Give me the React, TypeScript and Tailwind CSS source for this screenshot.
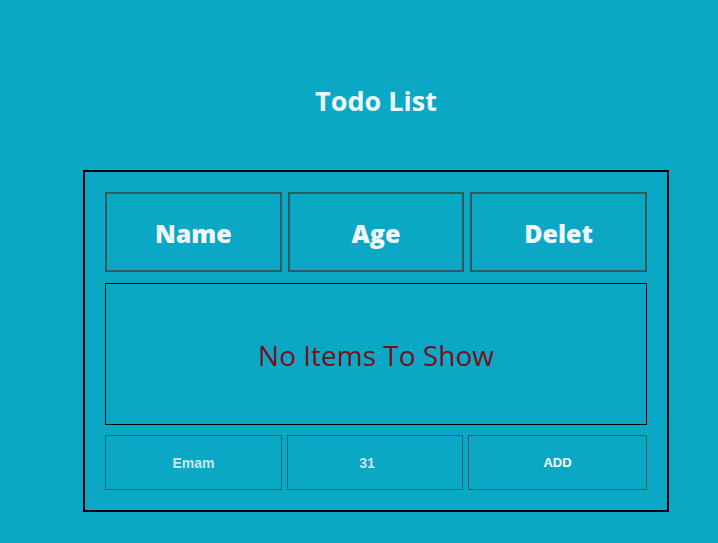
import { useState } from 'react'

interface Item {
  name: string
  age: string
}

export default function App() {
  const [items, setItems] = useState<Item[]>([])
  const [name, setName] = useState('')
  const [age, setAge] = useState('')

  const addItem = () => {
    if (!name || !age) return
    setItems([...items, { name, age }])
    setName('')
    setAge('')
  }

  return (
    <div className="min-h-[543px] bg-[#0ba8c6] pt-[80px] pb-[31px]" style={{ fontFamily: '"Open Sans", "Noto Sans", sans-serif' }}>
      <h1 className="ml-[83px] w-[586px] text-center text-[27px] font-bold leading-[42px] text-[#f0f8ff]">Todo List</h1>

      <div className="ml-[83px] mt-[48px] w-[586px] border-2 border-black p-[20px]">
        <div className="grid grid-cols-3 gap-[6px]">
          {['Name', 'Age', 'Delet'].map((h) => (
            <div key={h} className="flex h-[80px] items-center justify-center border-2 border-[#2f5a5e] pt-[3px] text-[25px] font-extrabold text-[#f0f8ff]">
              {h}
            </div>
          ))}
        </div>

        <div className="mt-[11px] flex h-[142px] flex-col items-center justify-center border border-black">
          {items.length ? (
            items.map((item, i) => (
              <div key={i} className="grid w-full grid-cols-3 text-center text-white">
                <span>{item.name}</span>
                <span>{item.age}</span>
                <span className="cursor-pointer" onClick={() => setItems(items.filter((_, j) => j !== i))}>x</span>
              </div>
            ))
          ) : (
            <p className="pt-[2px] text-[28px] text-[#7a0f1a]">No Items To Show</p>
          )}
        </div>

        <div className="mt-[10px] grid grid-cols-[177px_176px_179px] gap-[5px]" style={{ fontFamily: '"Liberation Sans", Arial, sans-serif' }}>
          <input
            value={name}
            onChange={(e) => setName(e.target.value)}
            placeholder="Emam"
            className="h-[55px] border border-[#1f6674] bg-transparent text-center text-[14px] font-bold text-white outline-none placeholder:text-[#cde3ea]"
          />
          <input
            value={age}
            onChange={(e) => setAge(e.target.value)}
            placeholder="31"
            className="h-[55px] border border-[#1f6674] bg-transparent pr-[16px] text-center text-[14px] font-bold text-white outline-none placeholder:text-[#cde3ea]"
          />
          <button onClick={addItem} className="h-[55px] border border-[#3a5a5e] bg-transparent text-[13px] font-bold text-white">
            ADD
          </button>
        </div>
      </div>
    </div>
  )
}
